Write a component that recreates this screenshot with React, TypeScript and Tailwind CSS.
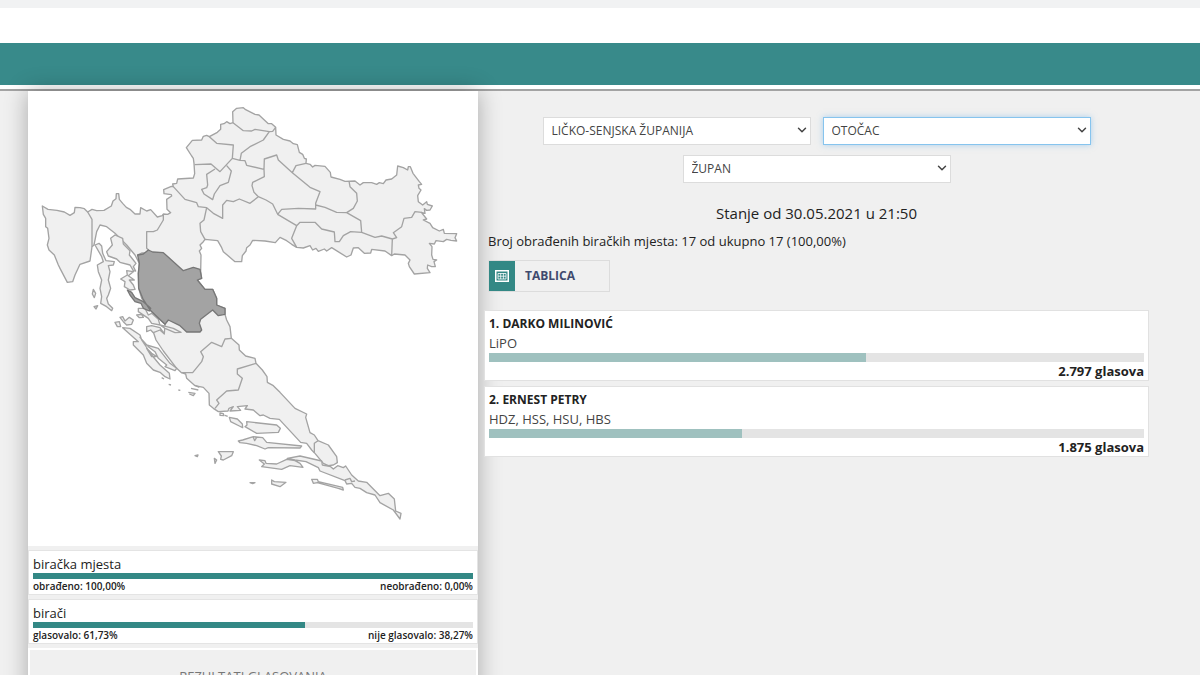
import { ChevronDown } from "lucide-react";

type Candidate = { name: string; parties: string; share: number; votes: string };

const candidates: Candidate[] = [
  { name: "1. DARKO MILINOVIĆ", parties: "LiPO", share: 57.5, votes: "2.797 glasova" },
  { name: "2. ERNEST PETRY", parties: "HDZ, HSS, HSU, HBS", share: 38.6, votes: "1.875 glasova" },
];

type Turnout = { title: string; share: number; left: string; right: string };

const turnout: Turnout[] = [
  { title: "biračka mjesta", share: 100, left: "obrađeno: 100,00%", right: "neobrađeno: 0,00%" },
  { title: "birači", share: 61.73, left: "glasovalo: 61,73%", right: "nije glasovalo: 38,27%" },
];

const mainland =
  "M37 333L54 343 81 346 103 351 120 361 133 353 135 337 150 338 163 341 173 351 186 343 200 347 222 346 244 333 249 318 258 311 259 296 266 296 268 313 278 325 289 337 300 343 315 357 330 357 332 338 350 348 362 344 382 366 397 362 400 357 413 358 422 353 411 343 410 313 425 303 424 299 402 296 401 284 424 274 430 275 428 267 440 265 443 252 490 249 494 236 492 205 490 190 485 183 469 158 487 136 515 135 520 124 530 121 538 125 562 112 572 103 572 88 582 86 590 80 600 86 609 83 608 50 620 40 640 38 647 44 675 58 687 60 715 86 725 86 737 97 738 120 760 133 780 138 790 146 802 149 808 172 818 178 823 190 829 192 828 205 840 208 848 216 855 211 885 214 901 232 903 246 930 253 945 259 975 258 990 270 1000 263 1025 263 1040 268 1048 263 1060 266 1068 255 1085 252 1100 240 1103 213 1120 218 1133 225 1135 215 1141 215 1149 235 1168 260 1175 268 1165 270 1167 280 1173 285 1163 302 1165 320 1178 330 1190 320 1192 328 1207 333 1200 345 1190 346 1183 341 1185 355 1174 352 1190 372 1180 375 1200 385 1208 398 1228 408 1240 403 1243 415 1280 416 1275 428 1280 438 1263 436 1250 433 1240 440 1218 437 1213 447 1198 445 1206 455 1205 480 1209 493 1220 495 1212 500 1216 515 1205 515 1193 510 1192 520 1200 533 1153 537 1138 515 1135 505 1140 495 1125 480 1093 477 1085 482 1065 468 1025 463 1022 474 1003 475 985 458 970 459 963 480 950 486 905 458 890 468 883 462 865 469 858 460 848 465 840 452 820 459 800 457 785 448 770 437 750 427 736 443 705 438 668 436 660 450 650 458 648 468 637 482 635 500 615 500 580 470 575 458 563 437 525 433 520 440 510 450 515 460 508 468 513 480 512 530 515 550 502 555 525 583 548 583 560 610 560 630 585 640 585 658 590 675 600 695 604 730 627 750 628 765 647 783 675 790 678 805 697 825 711 845 712 862 730 872 750 892 795 940 830 957 827 967 840 1013 853 1020 864 1037 895 1050 920 1085 922 1103 910 1110 895 1112 880 1105 853 1073 845 1065 830 1045 812 1042 748 973 720 970 700 960 690 962 670 945 645 942 652 932 622 935 632 946 600 948 610 935 597 940 594 948 565 950 550 940 538 930 537 895 520 877 495 872 470 850 467 837 453 832 440 820 400 768 378 735 368 705 385 700 403 715 405 688 360 645 335 610 326 580 325 535 328 505 315 480 290 450 255 415 230 395 210 390 200 410 192 450 186 455 180 498 150 508 135 540 128 560 112 562 90 520 85 510 73 480 57 465 52 450 57 430 53 400 47 395 47 370 40 358Z";

const borders =
  "M173 351L186 373V455M400 357V375L382 405 370 410H350V460L356 465M322 480L335 474 352 473 356 463M430 275L465 313 500 323 505 335 530 338 522 375 510 385 512 410 525 433M530 338L550 355 578 370V330L590 316 610 320 628 312 660 325 685 305M494 209L543 207 570 230 607 190 610 150 560 145 538 125M555 222L530 238 533 270 530 278 515 283 522 297 548 314 553 297 570 272 595 262 604 228 590 212M607 190L630 196 634 175 660 155 700 135 718 110 675 103 665 108 640 107 609 83M718 110L728 109 737 97M630 196L645 197 650 211 702 223 703 192 740 180 745 195 787 233 798 212 828 205M702 223L703 245 668 262 666 272 672 292 685 305M787 233L840 277 870 290 857 325V342L805 340 755 343 743 358 728 327 708 315 685 305M743 358L800 392 785 430 800 457M957 258L960 275 980 295 982 318 970 340 950 353 920 352 885 337 857 330M800 392L810 382H855L875 402 913 411 915 440H928L940 422 962 410 995 412M950 353L992 377 995 412 1035 427 1055 423 1087 432 1085 482M1087 432L1100 428 1090 413 1115 395 1122 370 1145 367 1155 350 1175 352M604 730L585 732 575 755 545 742 512 770 520 785 515 800 488 833 453 833M678 805L622 822V837L637 850 625 885 590 888 560 915 567 925 555 940M864 1037L853 1045V1073";

const lika =
  "M323 480L340 477 355 465 368 471 400 473 460 527 490 517 510 523 515 550 502 555 525 583 548 583 560 610 560 630 585 640 585 658 565 662 548 645 512 673 508 685 515 705 510 711 470 711 450 692 415 675 405 688 360 645 338 610 326 580 325 535 328 505ZM292 585L305 592 315 608 340 620 362 640 358 648 340 640 333 625 315 620 300 600Z";

// islands of the northern coast, Kvarner down to Kornati
const northIslands =
  "M105 15L92 25 97 45 80 65 85 78 110 87 120 97 150 105 160 122 167 123 160 110 168 100 160 90 148 75 150 62 130 42 128 25ZM45 45L57 40 65 48 68 70 78 92 103 95 100 105 85 107 90 125 85 150 92 175 85 195 80 205 85 222 98 235 95 242 80 230 62 220 65 200 60 175 65 150 55 125 52 105 70 95 65 80ZM160 125L140 122 142 135 122 147 135 155 133 170 150 180 165 178 160 165 148 150 163 150 145 137ZM40 178L47 190 43 203 37 192ZM42 230L53 227 48 237ZM175 235L195 235 205 255 215 250 235 268 240 285 260 290 280 295 303 307 285 308 255 295 240 285 215 280 205 265 175 245ZM200 290L215 287 240 293 253 312 240 300 220 308 212 300 200 305ZM170 255L185 253 190 262 178 263ZM120 262L128 260 135 273 148 262 160 270 155 283 140 285 130 275ZM105 277L118 275 122 290 112 290ZM128 293L150 295 180 315 185 330 215 375 240 405 268 430 270 447 255 440 240 427 220 420 200 400 190 375 160 345 160 335 175 335ZM180 322L200 345 235 355 270 400 290 415 285 422 255 410 260 405 235 385 225 365 205 350ZM200 355L215 370 230 380 215 380ZM245 443L252 447M266 463L273 465M295 480L301 481M325 487L345 490 340 497 328 492M333 475L355 480M345 466L358 472";

// Split and Dubrovnik islands with the Pelješac strip
const southIslands =
  "M148 52L172 57 187 72 188 83 178 78 152 65ZM200 65L290 75 301 85 295 97 230 100 195 80 201 75ZM188 120L220 110 248 113 260 127 365 138 360 144 265 143 255 147 230 137 200 130 180 128 175 123ZM220 112L224 122 230 112M115 155L160 155 155 167 130 180 122 178 124 168ZM103 175L110 180 105 190ZM45 167L54 165 52 170ZM238 180L255 182 258 190 290 192 320 178 345 182 360 190 369 202 330 197 305 208 245 200 253 192ZM275 240L283 245 318 247 300 260 275 252ZM210 248L225 248 218 251ZM395 238L412 238 415 245 488 262 490 270 475 265 412 248 400 250ZM120 39L130 41 132 47 120 46ZM135 46L143 49M322 175L360 168 425 183 427 195 452 200 460 207 473 197 490 203 497 198 515 225 535 243 560 247 600 287 625 280 643 297 647 333 663 340 660 357 640 330 600 308 585 285 560 278 540 265 525 262 515 250 500 252 495 242 420 213 415 203 378 185 345 180ZM495 240L510 235 515 245 525 243";

function CroatiaMap() {
  return (
    <svg viewBox="0 0 1350 1365" className="block w-full" role="img" aria-label="Karta županija">
      <g fill="#f0f0f0" stroke="#a3a3a3" strokeWidth="4" strokeLinejoin="round">
        <g transform="translate(6 12)">
          <path d={mainland} />
          <path d={borders} fill="none" />
          <g transform="translate(150 405)">
            <path d={northIslands} />
          </g>
          <g transform="translate(450 915)">
            <path d={southIslands} />
          </g>
          <path d={lika} fill="#a3a3a3" stroke="#777" />
        </g>
      </g>
    </svg>
  );
}

function Picker({ label, value, focused }: { label: string; value: string; focused?: boolean }) {
  return (
    <div className="relative w-[268px]">
      <select
        aria-label={label}
        className={
          focused
            ? "h-7 w-full appearance-none border border-[#86c4ee] bg-white pl-2 text-[12px] text-[#444] shadow-[0_0_6px_rgba(102,175,233,0.5)] outline-none"
            : "h-7 w-full appearance-none border border-[#dcdcdc] bg-white pl-2 text-[12px] text-[#444] outline-none"
        }
      >
        <option>{value}</option>
      </select>
      <ChevronDown className="pointer-events-none absolute top-1.5 right-0.5 h-3.5 w-3.5 text-[#444]" strokeWidth={2.5} />
    </div>
  );
}

function TurnoutCard({ item }: { item: Turnout }) {
  return (
    <section className="border border-[#e4e4e4] bg-white px-1 pt-1 pb-px">
      <h3 className="text-[13px] leading-[18px]">{item.title}</h3>
      <div className="h-1.5 bg-[#e4e4e4]">
        <div className="h-full bg-[#338885]" style={{ width: `${item.share}%` }} />
      </div>
      <div className="flex justify-between text-[10px] leading-[14px] font-semibold">
        <span>{item.left}</span>
        <span>{item.right}</span>
      </div>
    </section>
  );
}

function CandidateCard({ item }: { item: Candidate }) {
  return (
    <section className="border border-[#e1e1e1] bg-white px-1 pt-[3px]">
      <h3 className="text-[12px] leading-5 font-bold">{item.name}</h3>
      <p className="pb-px text-[13px] leading-[18px] text-[#444]">{item.parties}</p>
      <div className="h-[9px] bg-[#e4e4e4]">
        <div className="h-full bg-[#9fc1bf]" style={{ width: `${item.share}%` }} />
      </div>
      <p className="text-right text-[13px] leading-[18px] font-bold">{item.votes}</p>
    </section>
  );
}

export default function App() {
  return (
    <div className="h-screen overflow-hidden bg-[#f0f0f0] font-['Trebuchet_MS','Open_Sans',sans-serif] text-[#222]">
      <header>
        <div className="h-2 bg-[#f1f2f3]" />
        <div className="h-[35px] bg-white" />
        <div className="h-[42px] bg-[#388a8a]" />
        <div className="h-1.5 border-b-2 border-[#a3a3a3] bg-white" />
      </header>

      <main className="flex items-start">
        <aside className="ml-7 w-[37.5%] bg-[#f0f0f0] shadow-[0_0_22px_rgba(0,0,0,0.3)]">
          <div className="bg-white">
            <CroatiaMap />
          </div>
          <div className="flex flex-col gap-1 pt-1">
            {turnout.map((item) => (
              <TurnoutCard key={item.title} item={item} />
            ))}
            <section className="border-2 border-white pt-4 pb-6 text-center text-[13px] leading-5 text-[#777]">
              REZULTATI GLASOVANJA
            </section>
          </div>
        </aside>

        <div className="flex-1 pt-[26px] pr-[51px] pl-1.5">
          <div className="mx-auto flex max-w-[560px] flex-wrap justify-center gap-x-3 gap-y-2.5">
            <Picker label="Županija" value="LIČKO-SENJSKA ŽUPANIJA" />
            <Picker label="Grad ili općina" value="OTOČAC" focused />
            <Picker label="Izbori" value="ŽUPAN" />
          </div>

          <h2 className="mt-[18px] text-center text-[15px] leading-6">Stanje od 30.05.2021 u 21:50</h2>
          <p className="mt-1 pl-1 text-[13px] leading-6">
            Broj obrađenih biračkih mjesta: 17 od ukupno 17 (100,00%)
          </p>

          <button
            type="button"
            className="mt-[7px] ml-1 flex h-8 w-[122px] items-center border border-[#dcdcdc] text-[12px] font-bold text-[#3f4a6e]"
          >
            <span className="flex h-full w-[26px] items-center justify-center bg-[#338885]">
              <svg viewBox="0 0 14 12" className="h-3 w-3.5" fill="none" stroke="#fff" aria-hidden="true">
                <rect x="0.75" y="0.75" width="12.5" height="10.5" strokeWidth="1.5" />
                <path d="M3 3.5H11V9H3ZM3 6.2H11M5.7 3.5V9M8.4 3.5V9" strokeWidth="0.8" />
              </svg>
            </span>
            <span className="pl-2.5">TABLICA</span>
          </button>

          <div className="mt-[18px] flex flex-col gap-[5px]">
            {candidates.map((item) => (
              <CandidateCard key={item.name} item={item} />
            ))}
          </div>
        </div>
      </main>
    </div>
  );
}
